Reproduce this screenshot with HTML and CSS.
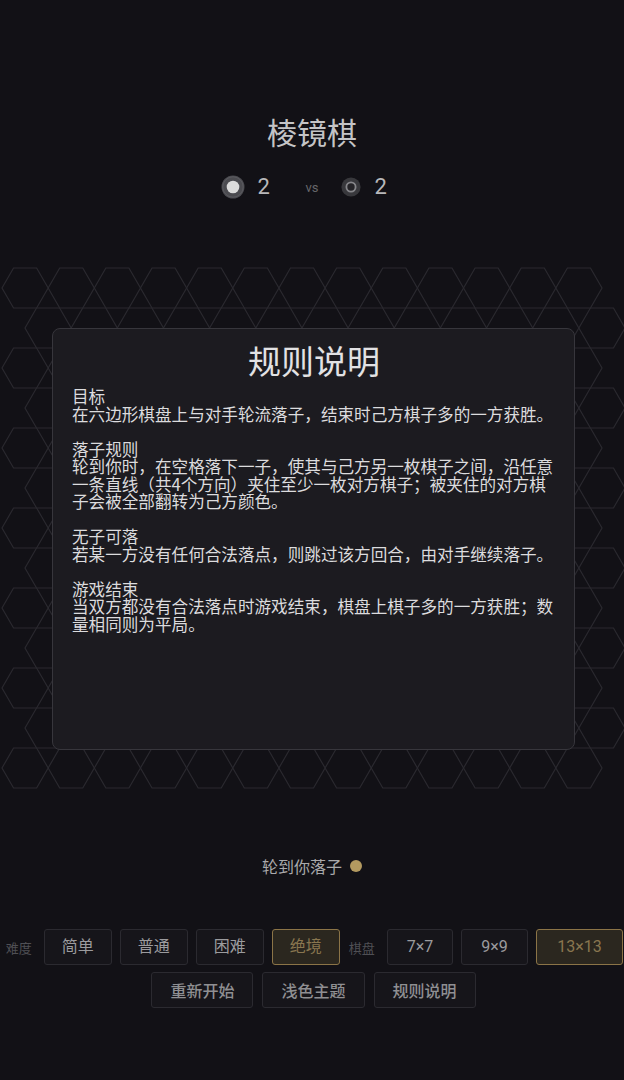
FILE: index.html
```html
<!DOCTYPE html>
<html lang="zh">
<head>
<meta charset="utf-8">
<title>棱镜棋</title>
<link rel="stylesheet" href="styles.css">
</head>
<body>
<div class="app">
  <h1 class="title">棱镜棋</h1>
  <div class="score">
    <div class="player">
      <svg class="stone" width="24" height="24" viewBox="0 0 24 24">
        <circle cx="12" cy="12" r="11.5" fill="#4b4b50"/>
        <circle cx="12" cy="12" r="10.2" fill="none" stroke="#5a5a5f" stroke-width="1"/>
        <circle cx="12" cy="12" r="6.3" fill="#dcdcdc"/>
      </svg>
      <span class="num">2</span>
    </div>
    <span class="vs">vs</span>
    <div class="player">
      <svg class="stone" width="24" height="24" viewBox="0 0 24 24">
        <circle cx="12" cy="12" r="9.6" fill="#38383c"/>
        <circle cx="12" cy="12" r="4.6" fill="#252428" stroke="#86868a" stroke-width="1.8"/>
      </svg>
      <span class="num">2</span>
    </div>
  </div>

  <svg class="board" width="624" height="524" viewBox="0 0 624 524">
    <defs>
      <polygon id="hx" points="0,20 11.54,0 34.62,0 46.15,20 34.62,40 11.54,40"/>
      <g id="row">
        <use href="#hx" x="0"/>
        <use href="#hx" x="46.154"/>
        <use href="#hx" x="92.308"/>
        <use href="#hx" x="138.46"/>
        <use href="#hx" x="184.62"/>
        <use href="#hx" x="230.77"/>
        <use href="#hx" x="276.92"/>
        <use href="#hx" x="323.08"/>
        <use href="#hx" x="369.23"/>
        <use href="#hx" x="415.38"/>
        <use href="#hx" x="461.54"/>
        <use href="#hx" x="507.69"/>
        <use href="#hx" x="553.85"/>
      </g>
    </defs>
    <g class="grid">
      <use href="#row" x="2" y="2"/>
      <use href="#row" x="25" y="42"/>
      <use href="#row" x="2" y="82"/>
      <use href="#row" x="25" y="122"/>
      <use href="#row" x="2" y="162"/>
      <use href="#row" x="25" y="202"/>
      <use href="#row" x="2" y="242"/>
      <use href="#row" x="25" y="282"/>
      <use href="#row" x="2" y="322"/>
      <use href="#row" x="25" y="362"/>
      <use href="#row" x="2" y="402"/>
      <use href="#row" x="25" y="442"/>
      <use href="#row" x="2" y="482"/>
    </g>
  </svg>

  <div class="status">轮到你落子<span class="dot"></span></div>

  <div class="controls">
    <span class="label">难度</span>
    <button class="btn">简单</button>
    <button class="btn">普通</button>
    <button class="btn">困难</button>
    <button class="btn active">绝境</button>
    <span class="label">棋盘</span>
    <button class="btn size">7×7</button>
    <button class="btn size">9×9</button>
    <button class="btn size wide active">13×13</button>
  </div>
  <div class="actions">
    <button class="btn act">重新开始</button>
    <button class="btn act">浅色主题</button>
    <button class="btn act">规则说明</button>
  </div>
</div>

<div class="modal">
  <h2 class="modal-title">规则说明</h2>
  <div class="modal-body">
    <p>目标<br>在六边形棋盘上与对手轮流落子，结束时己方棋子多的一方获胜。</p>
    <p>落子规则<br>轮到你时，在空格落下一子，使其与己方另一枚棋子之间，沿任意一条直线（共4个方向）夹住至少一枚对方棋子；被夹住的对方棋子会被全部翻转为己方颜色。</p>
    <p>无子可落<br>若某一方没有任何合法落点，则跳过该方回合，由对手继续落子。</p>
    <p>游戏结束<br>当双方都没有合法落点时游戏结束，棋盘上棋子多的一方获胜；数量相同则为平局。</p>
  </div>
</div>
</body>
</html>
```

FILE: styles.css
```css
html, body {
  margin: 0;
  padding: 0;
  background: #121116;
}
body {
  width: 624px;
  height: 1080px;
  overflow: hidden;
  font-family: "Noto Sans CJK SC", "Noto Sans", sans-serif;
  color: #bdbdbd;
  position: relative;
}
.app {
  display: flex;
  flex-direction: column;
  align-items: center;
  padding-top: 113px;
}
.title {
  margin: 0;
  font-size: 30px;
  line-height: 36px;
  font-weight: 400;
  color: #c4c4c6;
}
.score {
  margin-top: 23px;
  height: 30px;
  display: flex;
  align-items: center;
}
.player {
  display: flex;
  align-items: center;
  gap: 12px;
}
.stone { display: block; }
.num {
  min-width: 28px;
  font-family: Roboto, "Noto Sans", sans-serif;
  font-size: 22px;
  line-height: 30px;
  color: #b8b8ba;
}
.vs {
  margin: 0 20px 0 20px;
  font-family: Roboto, "Noto Sans", sans-serif;
  font-size: 13px;
  color: #66666a;
}
.board {
  display: block;
  margin-top: 64px;
}
.grid use {
  fill: none;
  stroke: #2a292f;
  stroke-width: 1.2;
}
.status {
  margin-top: 64px;
  height: 24px;
  display: flex;
  align-items: center;
  font-size: 16px;
  color: #a9a9ab;
}
.dot {
  width: 12px;
  height: 12px;
  border-radius: 50%;
  background: #b39a60;
  margin-left: 8px;
}
.controls {
  margin-top: 51px;
  display: flex;
  align-items: center;
  gap: 8px;
  padding-left: 4px;
}
.actions {
  margin-top: 7px;
  display: flex;
  align-items: center;
  gap: 9px;
  padding-left: 3px;
}
.label {
  font-size: 13px;
  color: #4f4f54;
  margin: 0 4px 0 1px;
}
.btn {
  height: 36px;
  box-sizing: border-box;
  padding: 0 17px;
  background: #16151a;
  border: 1px solid #2b2a30;
  border-radius: 3px;
  color: #9b9b9e;
  font-family: Roboto, "Noto Sans CJK SC", sans-serif;
  font-size: 16px;
  line-height: 34px;
}
.btn.size {
  padding: 0 19px;
}
.btn.wide {
  padding: 0 20.5px;
}
.btn.act {
  padding: 0 18px;
  font-family: "Noto Sans CJK SC", sans-serif;
  font-weight: 500;
  color: #8f8f92;
}
.btn.active {
  background: #2b271f;
  border: 1.5px solid #8b7447;
  color: #89764f;
}
.modal {
  position: absolute;
  left: 52px;
  top: 328px;
  width: 523px;
  height: 422px;
  box-sizing: border-box;
  background: #1c1b20;
  border: 1.5px solid #37363c;
  border-radius: 8px;
  padding: 11px 18px 0 19px;
}
.modal-title {
  margin: 0;
  text-align: center;
  font-size: 33px;
  line-height: 41px;
  font-weight: 400;
  color: #e2e2e4;
}
.modal-body {
  margin-top: 7px;
  font-size: 16.6px;
  line-height: 17.5px;
  color: #dcdcde;
}
.modal-body p {
  margin: 0 0 17.5px 0;
}
```
